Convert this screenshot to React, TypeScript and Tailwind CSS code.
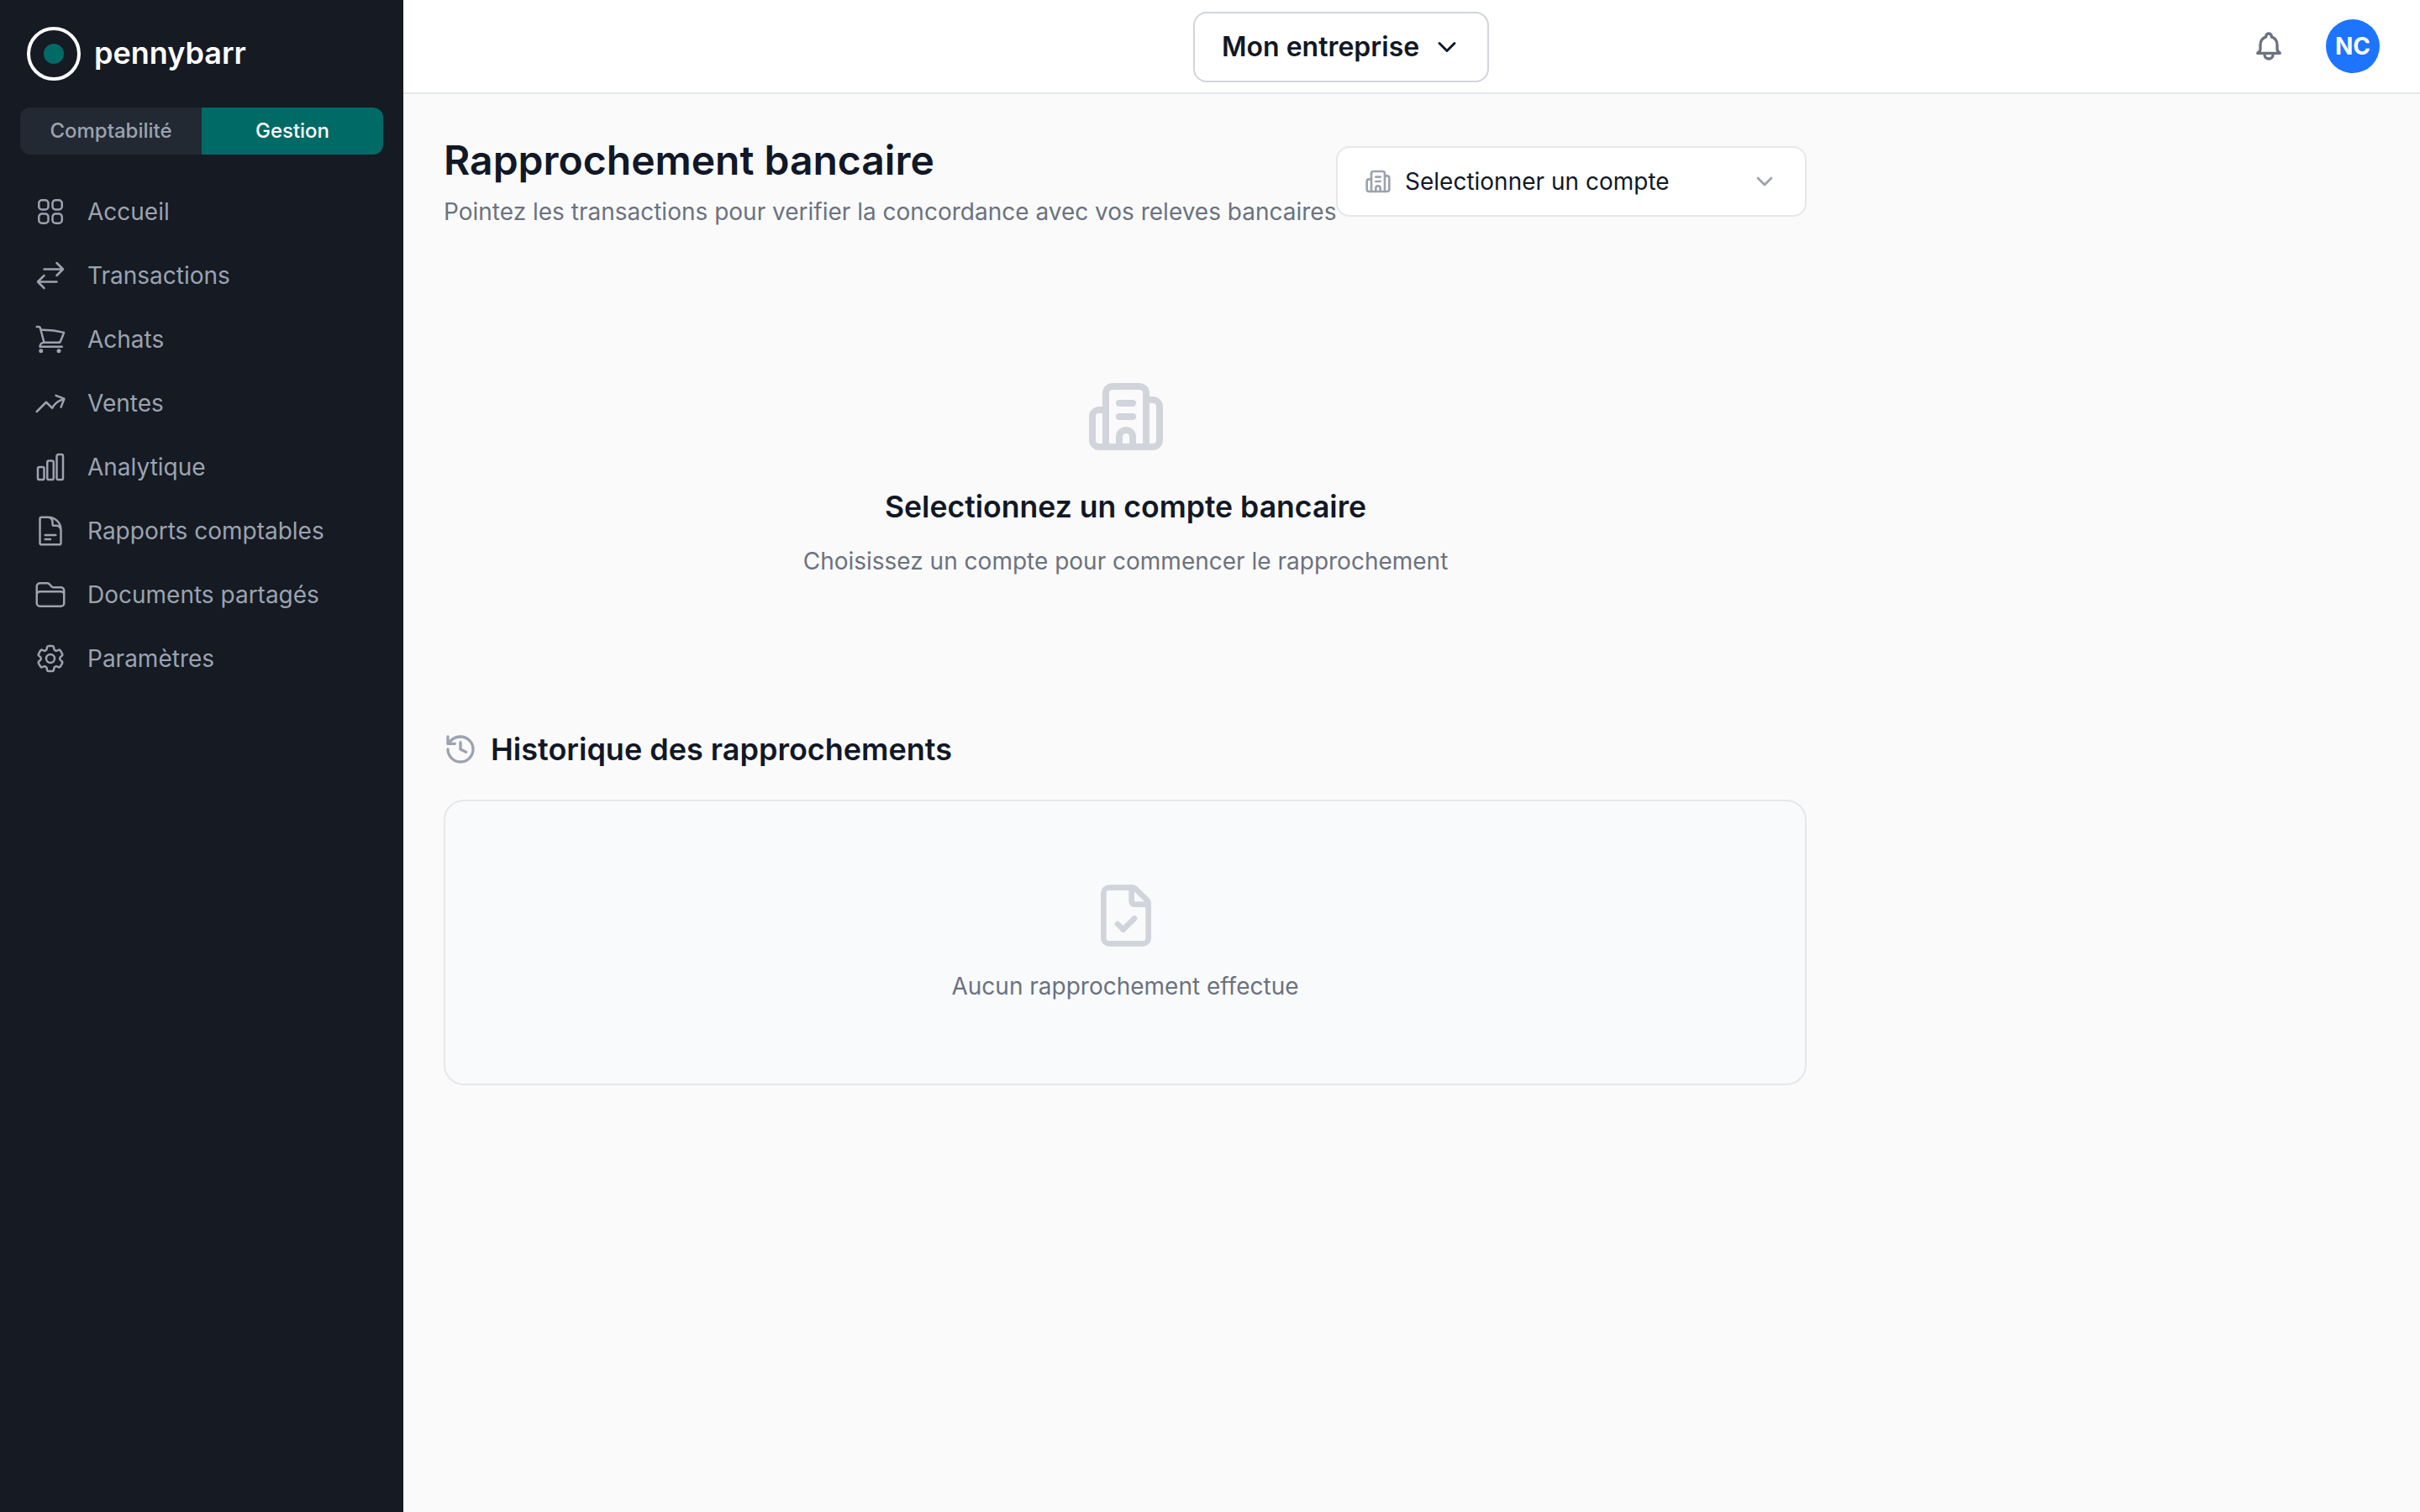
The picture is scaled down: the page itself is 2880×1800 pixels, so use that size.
import { ChevronDown, Building2, History, FileCheck } from "lucide-react";
import {
  HiOutlineSquares2X2,
  HiOutlineArrowsRightLeft,
  HiOutlineShoppingCart,
  HiOutlineArrowTrendingUp,
  HiOutlineChartBar,
  HiOutlineDocumentText,
  HiOutlineFolder,
  HiOutlineCog6Tooth,
} from "react-icons/hi2";
import { HiOutlineBell } from "react-icons/hi";

const items = [
  { label: "Accueil", Icon: HiOutlineSquares2X2 },
  { label: "Transactions", Icon: HiOutlineArrowsRightLeft },
  { label: "Achats", Icon: HiOutlineShoppingCart },
  { label: "Ventes", Icon: HiOutlineArrowTrendingUp },
  { label: "Analytique", Icon: HiOutlineChartBar },
  { label: "Rapports comptables", Icon: HiOutlineDocumentText },
  { label: "Documents partagés", Icon: HiOutlineFolder },
  { label: "Paramètres", Icon: HiOutlineCog6Tooth },
];

export default function App() {
  return (
    <div className="flex h-[1800px] w-[2880px] bg-[#fafafa] font-['Inter',sans-serif] overflow-hidden">
      <aside className="w-[480px] shrink-0 bg-[#151a23] flex flex-col">
        <div className="h-[128px] flex items-center gap-[16px] pl-[32px] shrink-0">
          <div className="w-[64px] h-[64px] rounded-full border-[4px] border-white flex items-center justify-center">
            <div className="w-[24px] h-[24px] rounded-full bg-[#006a67]" />
          </div>
          <span className="text-white text-[36px] leading-[44px] mt-[-2px] font-semibold">pennybarr</span>
        </div>
        <div className="mx-[24px] h-[56px] flex rounded-[12px] overflow-hidden bg-[#222932] text-[24px] font-medium">
          <div className="w-[216px] flex items-center justify-center text-[#9ca3af]">Comptabilité</div>
          <div className="flex-1 flex items-center justify-center bg-[#006a67] text-white">Gestion</div>
        </div>
        <nav className="mt-[30px] flex flex-col px-[24px]">
          {items.map(({ label, Icon }) => (
            <div key={label} className="h-[76px] flex items-center gap-[24px] pl-[16px] text-[#9ca3af] text-[28px]">
              <Icon className="w-[40px] h-[40px]" />
              <span>{label}</span>
            </div>
          ))}
        </nav>
      </aside>
      <div className="flex-1 flex flex-col min-w-0">
        <header className="h-[112px] shrink-0 bg-white border-b-2 border-[#e5e7eb] flex items-center justify-between pl-[940px] pr-[48px]">
          <div className="h-[84px] mt-[2px] w-[352px] rounded-[16px] border-2 border-[#d1d5db] flex items-center pl-[32px] gap-[15px] text-[#111827] text-[32px] font-semibold whitespace-nowrap">
            Mon entreprise
            <ChevronDown strokeWidth={2} className="w-[36px] h-[36px] shrink-0" />
          </div>
          <div className="flex items-center gap-[48px]">
            <HiOutlineBell className="w-[40px] h-[40px] text-[#6b7280]" />
            <div className="w-[64px] h-[64px] rounded-full bg-[#1d74ff] text-white text-[28px] font-bold flex items-center justify-center">NC</div>
          </div>
        </header>
        <main className="w-[1622px] ml-[48px] mt-[48px] flex flex-col">
          <div className="flex justify-between items-center">
            <div className="flex-1 min-w-0">
              <h1 className="text-[48px] leading-[62px] font-semibold text-[#111827]">Rapprochement bancaire</h1>
              <p className="text-[#6b7280] text-[28px] leading-[40px] mt-[10px] whitespace-nowrap">Pointez les transactions pour verifier la concordance avec vos releves bancaires</p>
            </div>
            <div className="w-[560px] shrink-0 h-[84px] rounded-[16px] border-2 border-[#e5e7eb] bg-white flex items-center px-[32px] gap-[16px] text-[28px] text-[#111827]">
              <Building2 strokeWidth={2} className="w-[32px] h-[32px] text-[#9ca3af]" />
              <span className="flex-1">Selectionner un compte</span>
              <ChevronDown strokeWidth={2} className="w-[32px] h-[32px] text-[#9ca3af]" />
            </div>
          </div>
          <div className="flex flex-col items-center mt-[176px] pl-[1px]">
            <Building2 strokeWidth={2} className="w-[96px] h-[96px] text-[#d1d5db]" />
            <div className="mt-[32px] text-[35.6px] leading-[56px] font-semibold text-[#111827]">Selectionnez un compte bancaire</div>
            <div className="mt-[16px] text-[28px] leading-[40px] text-[#6b7280]">Choisissez un compte pour commencer le rapprochement</div>
          </div>
          <div className="flex items-center gap-[16px] mt-[176px]">
            <History strokeWidth={2} className="w-[40px] h-[40px] text-[#9ca3af]" />
            <div className="text-[36px] leading-[56px] font-semibold text-[#111827]">Historique des rapprochements</div>
          </div>
          <div className="mt-[32px] h-[340px] rounded-[24px] border-2 border-[#e5e7eb] bg-[#f9fafb] flex flex-col items-center justify-center">
            <FileCheck strokeWidth={2} className="w-[80px] h-[80px] text-[#d1d5db] ml-[1px]" />
            <div className="mt-[24px] text-[28px] leading-[40px] text-[#6b7280]">Aucun rapprochement effectue</div>
          </div>
        </main>
      </div>
    </div>
  );
}
